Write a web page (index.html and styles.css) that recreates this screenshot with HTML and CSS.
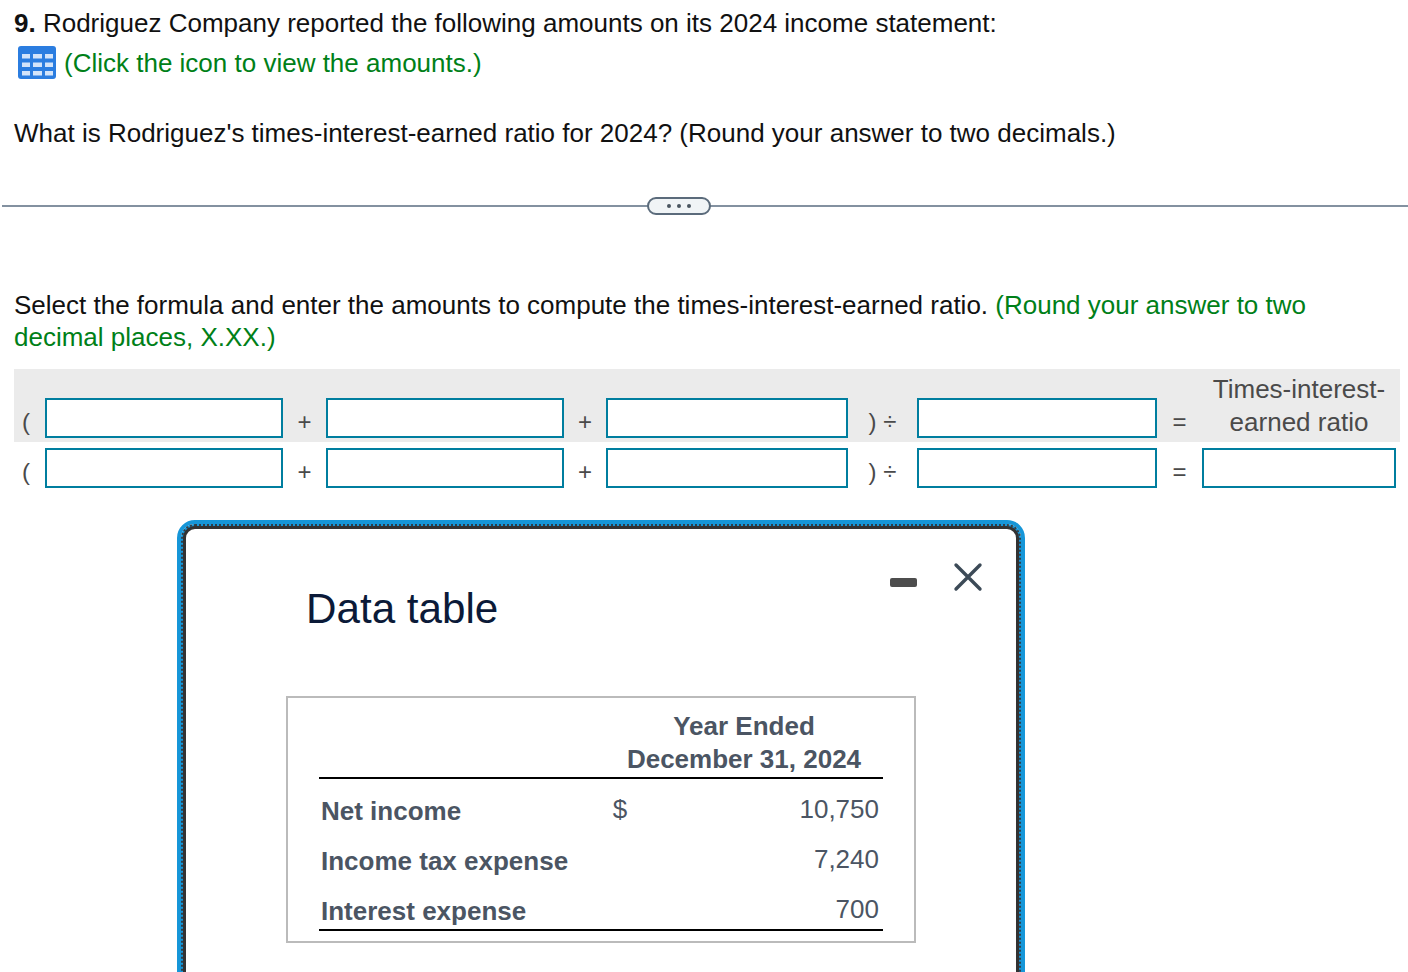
FILE: index.html
```html
<!DOCTYPE html>
<html lang="en">
<head>
  <meta charset="UTF-8">
  <title>Question 9</title>
  <link rel="stylesheet" href="styles.css">
</head>
<body>
  <div class="question">
    <p class="line"><b>9.</b> Rodriguez Company reported the following amounts on its 2024 income statement:</p>
    <p class="line icon-line">
      <svg class="table-icon" width="38" height="33" viewBox="0 0 38 33">
        <rect width="38" height="33" rx="3" fill="#2b7de0"/>
        <g fill="#d3e4fa">
          <rect x="4" y="8" width="8" height="4.5"/><rect x="15" y="8" width="9" height="4.5"/><rect x="27" y="8" width="8" height="4.5"/>
          <rect x="4" y="16.5" width="8" height="4.5"/><rect x="15" y="16.5" width="9" height="4.5"/><rect x="27" y="16.5" width="8" height="4.5"/>
          <rect x="4" y="25" width="8" height="4.5"/><rect x="15" y="25" width="9" height="4.5"/><rect x="27" y="25" width="8" height="4.5"/>
        </g>
      </svg>
      <span class="green">(Click the icon to view the amounts.)</span>
    </p>
    <p class="line ask">What is Rodriguez's times-interest-earned ratio for 2024? (Round your answer to two decimals.)</p>
  </div>

  <div class="divider"><button class="more"><i></i><i></i><i></i></button></div>

  <p class="select">Select the formula and enter the amounts to compute the times-interest-earned ratio. <span class="green">(Round your answer to two decimal places, X.XX.)</span></p>

  <div class="formula">
    <div class="band"></div>
    <span class="sym paren">(</span>
    <input class="box"><span class="sym">+</span>
    <input class="box"><span class="sym">+</span>
    <input class="box"><span class="sym close-div">) ÷</span>
    <input class="box"><span class="sym">=</span>
    <span class="result-label">Times-interest-<br>earned ratio</span>

    <span class="sym paren">(</span>
    <input class="box"><span class="sym">+</span>
    <input class="box"><span class="sym">+</span>
    <input class="box"><span class="sym close-div">) ÷</span>
    <input class="box"><span class="sym">=</span>
    <input class="box">
  </div>

  <div class="modal">
    <div class="modal-dots">
      <div class="modal-inner">
        <div class="modal-head">
          <h2>Data table</h2>
          <div class="modal-tools">
            <span class="minimize"></span>
            <svg class="close" width="30" height="30" viewBox="0 0 30 30">
              <path d="M3 3 L27 27 M27 3 L3 27" stroke="#3c4a57" stroke-width="3.4" stroke-linecap="round" fill="none"/>
            </svg>
          </div>
        </div>
        <div class="table-wrap">
          <table class="data">
            <colgroup>
              <col class="col-name"><col class="col-cur"><col class="col-num">
            </colgroup>
            <tr class="head">
              <th></th>
              <th class="year" colspan="2">Year Ended<br>December 31, 2024</th>
            </tr>
            <tr>
              <td class="name">Net income</td><td class="cur">$</td><td class="num">10,750</td>
            </tr>
            <tr>
              <td class="name">Income tax expense</td><td class="cur"></td><td class="num">7,240</td>
            </tr>
            <tr class="last">
              <td class="name">Interest expense</td><td class="cur"></td><td class="num">700</td>
            </tr>
          </table>
        </div>
      </div>
    </div>
  </div>
</body>
</html>
```

FILE: styles.css
```css
html, body {
  margin: 0;
  height: 972px;
  overflow: hidden;
}
body {
  font-family: "Liberation Sans", Arial, sans-serif;
  font-size: 26px;
  color: #111;
  background: #fff;
}
p {
  margin: 0;
}
.green {
  color: #008018;
}
.question {
  padding: 7px 14px 0;
}
.line {
  line-height: 32px;
}
.icon-line {
  display: flex;
  align-items: center;
  gap: 8px;
  margin-top: 7px;
  margin-left: 4px;
}
.ask {
  margin-top: 38px;
}
.divider {
  margin: 56px 0 0 2px;
  height: 2px;
  background: #8391a0;
  display: flex;
  justify-content: center;
  align-items: center;
  padding-right: 53px;
}
.more {
  flex: none;
  width: 64px;
  height: 18px;
  padding: 0;
  box-sizing: border-box;
  border: 2px solid #5b6b7b;
  border-radius: 9px;
  background: #f0f4f6;
  display: flex;
  align-items: center;
  justify-content: center;
  gap: 6px;
}
.more i {
  width: 4px;
  height: 4px;
  border-radius: 50%;
  background: #4a5560;
}
.select {
  margin: 82px 14px 0;
  line-height: 32px;
}
.formula {
  position: relative;
  display: grid;
  grid-template-columns: 31px 238px 43px 238px 42px 242px 69px 240px 45px 194px;
  grid-template-rows: 40px 40px;
  row-gap: 10px;
  margin: 0 0 0 14px;
  padding-top: 45px;
  align-items: center;
  color: #4a4a4a;
}
.band {
  position: absolute;
  left: 0;
  top: 16px;
  width: 1386px;
  height: 73px;
  background: #ebebeb;
}
.box {
  position: relative;
  box-sizing: border-box;
  width: 100%;
  height: 40px;
  padding: 0;
  border: 2px solid #007e9f;
  border-radius: 0;
  background: #fff;
}
.sym {
  position: relative;
  text-align: center;
  font-size: 24px;
  line-height: 40px;
  padding-top: 7px;
}
.paren {
  text-align: left;
  padding-left: 8px;
}
.close-div {
  white-space: nowrap;
}
.result-label {
  position: relative;
  text-align: center;
  line-height: 33px;
  align-self: end;
  white-space: nowrap;
  margin-bottom: -1px;
}
.modal {
  box-sizing: border-box;
  width: 848px;
  height: 600px;
  margin: 32px 0 0 177px;
  border: 4px solid #1696d8;
  border-radius: 18px;
}
.modal-dots {
  box-sizing: border-box;
  height: 100%;
  border: 2px dotted #2f3f4a;
  border-radius: 14px;
  background: #1696d8;
}
.modal-inner {
  box-sizing: border-box;
  height: 100%;
  border: 3px solid #333;
  border-radius: 12px;
  padding: 0 0 0 100px;
  background: #fff;
}
.modal-head {
  display: flex;
  justify-content: space-between;
  height: 167px;
}
.modal-head h2 {
  margin: 54px 0 0 20px;
  font-size: 42.2px;
  line-height: 52px;
  font-weight: 400;
  color: #0b1a38;
}
.modal-tools {
  display: flex;
  align-items: flex-start;
  gap: 36px;
  padding: 33px 33px 0 0;
}
.minimize {
  width: 27px;
  height: 9px;
  margin-top: 16px;
  border-radius: 2px;
  background: #4d4d4d;
}
.table-wrap {
  box-sizing: border-box;
  width: 630px;
  height: 247px;
  border: 2px solid #bbb;
  padding: 0 31px;
}
.data {
  width: 564px;
  table-layout: fixed;
  border-collapse: separate;
  border-spacing: 0;
  color: #4b5563;
}
.col-name {
  width: 286px;
}
.col-cur {
  width: 30px;
}
.data th, .data td {
  padding: 0;
  box-sizing: border-box;
}
.head th {
  height: 81px;
  border-bottom: 2px solid #000;
  line-height: 33px;
  vertical-align: bottom;
}
.data .year {
  text-align: center;
  padding-bottom: 1px;
}
.data td {
  height: 50px;
  line-height: 30px;
  vertical-align: top;
  padding-top: 15px;
}
.data td.name {
  padding-top: 17px;
  padding-left: 2px;
  font-weight: 700;
  white-space: nowrap;
}
.cur {
  text-align: center;
}
.data .num {
  text-align: right;
  padding-right: 4px;
}
.data .last td {
  height: 52px;
  border-bottom: 2px solid #000;
}
```
